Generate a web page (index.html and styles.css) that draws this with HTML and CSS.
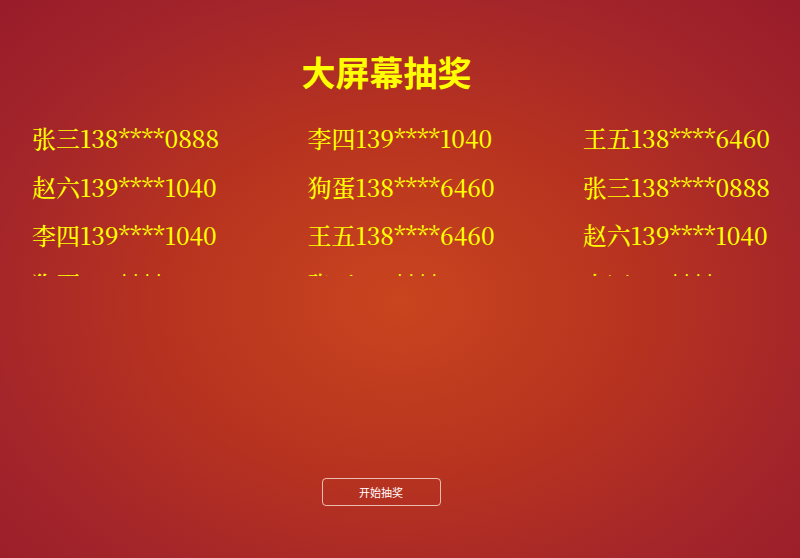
FILE: index.html
```html
<!DOCTYPE html>
<html lang="zh-CN">
<head>
<meta charset="utf-8">
<title>大屏幕抽奖</title>
<link rel="stylesheet" href="styles.css">
</head>
<body>
<main class="screen">
  <h1 class="title">大屏幕抽奖</h1>
  <div class="list">
    <div class="grid">
      <span>张三138****0888</span><span>李四139****1040</span><span>王五138****6460</span>
      <span>赵六139****1040</span><span>狗蛋138****6460</span><span>张三138****0888</span>
      <span>李四139****1040</span><span>王五138****6460</span><span>赵六139****1040</span>
      <span>狗蛋138****6460</span><span>张三138****0888</span><span>李四139****1040</span>
    </div>
  </div>
  <button class="start">开始抽奖</button>
</main>
</body>
</html>
```

FILE: styles.css
```css
html, body {
  margin: 0;
  padding: 0;
  height: 100%;
}
body {
  background: radial-gradient(ellipse 70% 75% at 50% 54%, #c9451f 0%, #b8341f 40%, #a4252a 75%, #981c2a 100%);
  overflow: hidden;
}
.screen {
  height: 558px;
  display: flex;
  flex-direction: column;
  align-items: center;
}
.title {
  margin: 48px 27px 0 0;
  font-family: "Noto Sans CJK SC", "Noto Sans", sans-serif;
  font-weight: 700;
  font-size: 34px;
  line-height: 48px;
  color: #ffff00;
}
.list {
  margin-top: 18px;
  width: 100%;
  box-sizing: border-box;
  padding: 0 30px 0 32px;
  height: 162px;
  overflow: hidden;
}
.grid {
  display: grid;
  grid-template-columns: auto auto auto;
  justify-content: space-between;
  font-family: "Noto Serif CJK SC", "Liberation Serif", serif;
  font-weight: 500;
  font-size: 24px;
  line-height: 48.5px;
  color: #ffff00;
  white-space: nowrap;
}
.start {
  margin: 202px 38px 0 0;
  width: 119px;
  height: 28px;
  background: transparent;
  border: 1px solid rgba(255, 235, 225, 0.75);
  border-radius: 4px;
  color: #fff;
  font-family: "Noto Sans CJK SC", sans-serif;
  font-size: 11px;
  padding: 0;
}
```
